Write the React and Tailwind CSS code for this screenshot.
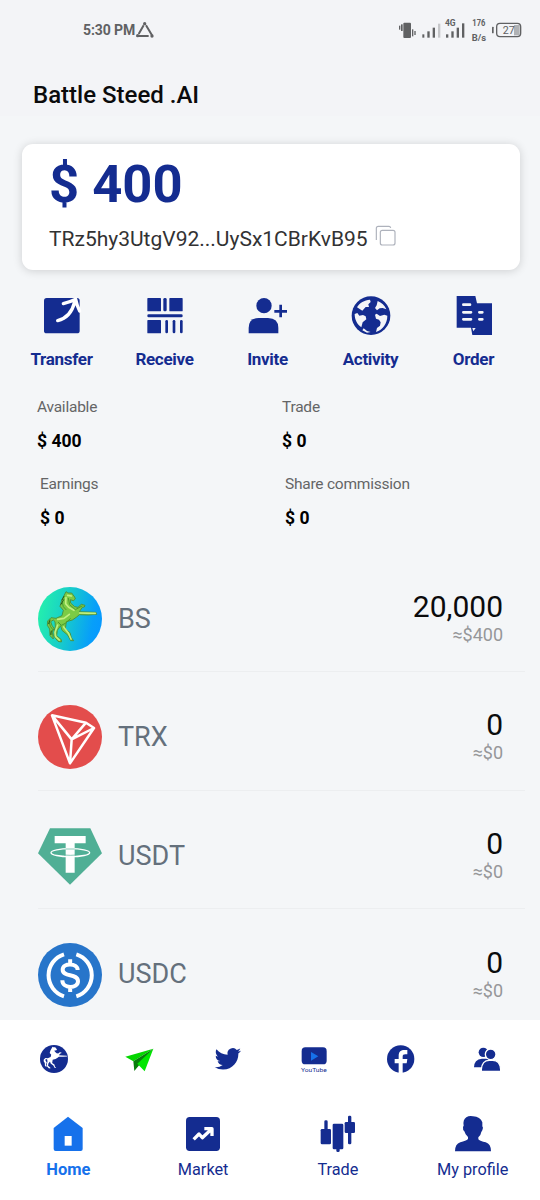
import React from "react";

const HORSE =
  "M138 62L144 66L155 66L164 78L166 84L160 89L151 86L152 96L164 107L174 109L184 100L195 103L193 108L187 109L178 122L228 124L230 130L204 132L178 131L170 138L157 147L139 152L136 174L150 185L154 200L161 209L152 209L143 192L126 178L122 164L112 178L110 194L124 206L124 213L114 211L101 195L103 178L106 166L105 152L100 147L92 152L96 163L102 172L97 184L100 204L90 194L89 174L82 163L83 150L93 140L108 142L126 134L130 118L120 106L125 88Z";

function StatusBar() {
  return (
    <div className="flex h-[60px] shrink-0 items-center justify-between pl-[83px] pr-[18px] text-[#606163]">
      <div className="flex items-center gap-[2px]">
        <span className="w-[51px] whitespace-nowrap text-[14px] font-bold leading-5 tracking-[-0.1px]">5:30 PM</span>
        <svg className="h-[16px] w-[18px]" viewBox="410 65 54 48" fill="none" stroke="currentColor" strokeWidth="6">
          <path d="M433 75L418 101M440 75L458 105M413 107H448" />
          <g fill="currentColor" stroke="none">
            <circle cx="436" cy="70" r="5" />
            <circle cx="415" cy="106" r="5" />
            <circle cx="458" cy="107" r="5" />
          </g>
        </svg>
      </div>
      <svg className="h-[26px] w-[124px]" viewBox="384 50 372 78">
        <g fill="currentColor">
          <rect x="400" y="67" width="23" height="46" rx="3" />
          <rect x="393" y="72" width="5" height="20" />
          <rect x="387" y="76" width="4" height="12" />
          <rect x="426" y="87" width="4" height="21" />
          <rect x="433" y="92" width="4" height="12" />
          <rect x="457" y="102" width="6" height="10" />
          <rect x="472" y="93" width="7" height="19" />
          <rect x="488" y="82" width="7" height="30" />
          <rect x="504" y="70" width="7" height="42" opacity=".3" />
          <rect x="528" y="102" width="7" height="10" />
          <rect x="544" y="93" width="7" height="19" />
          <rect x="560" y="82" width="7" height="30" />
          <rect x="576" y="69" width="7" height="43" />
          <rect x="666" y="79" width="5" height="20" rx="2" />
          <rect x="732" y="74" width="17" height="31" opacity=".45" />
        </g>
        <rect x="680" y="69" width="72" height="40" rx="10" fill="none" stroke="currentColor" strokeWidth="4" />
        <g fill="currentColor" fontFamily="Roboto, sans-serif">
          <text x="525" y="78" fontSize="27" fontWeight="700" textLength="32" lengthAdjust="spacingAndGlyphs">4G</text>
          <text x="607" y="78" fontSize="27" fontWeight="700" textLength="39" lengthAdjust="spacingAndGlyphs">176</text>
          <text x="605" y="121" fontSize="26" fontWeight="700" textLength="43" lengthAdjust="spacingAndGlyphs">B/s</text>
          <text x="698" y="101" fontSize="34" textLength="36" lengthAdjust="spacingAndGlyphs">27</text>
        </g>
      </svg>
    </div>
  );
}

const actions = [
  {
    label: "Transfer",
    icon: (
      <svg className="h-[44px] w-[44px]" viewBox="121 42 132 132">
        <rect x="133" y="54" width="107" height="106" rx="8" fill="#142c90" />
        <path d="M174 122C198 116 217 98 225 66M191 71C203 68 214 65 228 58C230 68 233 79 240 93" fill="none" stroke="#fff" strokeWidth="10" strokeLinecap="round" strokeLinejoin="round" />
      </svg>
    ),
  },
  {
    label: "Receive",
    icon: (
      <svg className="h-[44px] w-[44px]" viewBox="429 42 132 132" fill="#142c90">
        <rect x="442" y="54" width="41" height="40" rx="2" />
        <rect x="490" y="54" width="10" height="40" rx="4" />
        <rect x="508" y="54" width="40" height="40" rx="2" />
        <rect x="442" y="103" width="106" height="9" rx="4" />
        <rect x="442" y="120" width="41" height="40" rx="2" />
        <rect x="496" y="120" width="8" height="40" rx="4" />
        <rect x="518" y="120" width="8" height="40" rx="4" />
        <rect x="540" y="120" width="8" height="40" rx="4" />
      </svg>
    ),
  },
  {
    label: "Invite",
    icon: (
      <svg className="h-[44px] w-[44px]" viewBox="737 42 132 132" fill="#142c90">
        <circle cx="791" cy="77" r="23" />
        <path d="M745 160V144Q745 114 775 114H803Q834 114 834 144V160Z" />
        <path d="M841 74V112M822 94H860" stroke="#142c90" strokeWidth="8" />
      </svg>
    ),
  },
  {
    label: "Activity",
    icon: (
      <svg className="h-[44px] w-[44px]" viewBox="237 42 132 132">
        <circle cx="303" cy="107" r="58" fill="#142c90" />
        <g fill="#f4f5f8">
          <path d="M261 82C269 68 283 61 300 59L302 66L295 73L297 81L287 81L277 92Z" />
          <path d="M254 102L262 99L268 107L279 105L287 109L289 118L278 127L274 142C261 132 254 119 254 102Z" />
          <path d="M323 63C335 68 344 76 349 88L338 84L329 85L321 91L315 84L320 76Z" />
          <path d="M352 107C352 131 338 149 318 156L321 144L330 137L332 127L327 119L318 116L315 104L320 101L330 108L343 104Z" />
          <path d="M281 145L291 153L302 156L291 158L277 151Z" />
        </g>
      </svg>
    ),
  },
  {
    label: "Order",
    icon: (
      <svg className="h-[44px] w-[44px]" viewBox="545 42 132 132">
        <path d="M559 48H615L620 70H665V165H606L602 143H559Z" fill="#142c90" />
        <path d="M579 74H599M579 97H602M579 118H602M627 97H636M627 118H636" stroke="#f4f5f8" strokeWidth="8" strokeLinecap="round" />
        <path d="M606 144H616L609 154Z" fill="#f4f5f8" />
      </svg>
    ),
  },
];

const stats = [
  [
    ["Available", "$ 400"],
    ["Trade", "$ 0"],
  ],
  [
    ["Earnings", "$ 0"],
    ["Share commission", "$ 0"],
  ],
];

const coins = [
  {
    name: "BS",
    amount: "20,000",
    value: "≈$400",
    icon: (
      <svg className="h-[64px] w-[64px]" viewBox="54 48 192 192">
        <defs>
          <linearGradient id="bs" x1="0" y1=".4" x2="1" y2=".6">
            <stop offset="0" stopColor="#24efad" />
            <stop offset=".4" stopColor="#18cfc8" />
            <stop offset=".85" stopColor="#079ff9" />
            <stop offset="1" stopColor="#0699ff" />
          </linearGradient>
        </defs>
        <circle cx="150" cy="144" r="96" fill="url(#bs)" />
        <path d={HORSE} fill="#7ccb45" stroke="#4a8a35" strokeWidth="2.5" strokeLinejoin="round" />
        <g fill="none" strokeLinecap="round" strokeLinejoin="round">
          <path d="M143 73L154 75M138 80L137 98L146 109L162 118M113 145L132 142L148 130M179 126L226 127M113 162L105 184L107 197L118 207M131 168L145 186L153 204" stroke="#c3f082" strokeWidth="5" />
          <path d="M145 82L149 101L166 116L186 105M127 95L130 107L138 116M115 154L124 163L136 157L151 143M87 152L91 166L98 175L95 191" stroke="#4a9a30" strokeWidth="3" />
          <path d="M132 76L126 87M131 86L123 100M90 147L86 158M94 180L92 190" stroke="#265d1d" strokeWidth="3" />
        </g>
      </svg>
    ),
  },
  {
    name: "TRX",
    amount: "0",
    value: "≈$0",
    icon: (
      <svg className="h-[64px] w-[64px]" viewBox="55 405 192 192">
        <circle cx="151" cy="501" r="96" fill="#e34d4c" />
        <path d="M97 436L199 458L223 474L151 580ZM97 436L156 508L199 458M156 508L223 474M156 508L151 580" fill="none" stroke="#fff" strokeWidth="7.5" strokeLinejoin="round" />
      </svg>
    ),
  },
  {
    name: "USDT",
    amount: "0",
    value: "≈$0",
    icon: (
      <svg className="h-[64px] w-[64px]" viewBox="55 40 192 192">
        <path d="M91 53H212L247 128L151 222L55 128Z" fill="#50af95" />
        <ellipse cx="152" cy="126" rx="58" ry="12" fill="none" stroke="#fff" strokeWidth="4" />
        <path d="M105 76H198V98H165V186H138V98H105Z" fill="#fff" />
        <path d="M138 115H165M133 133Q152 135 170 133" fill="none" stroke="#50af95" strokeWidth="2" />
      </svg>
    ),
  },
  {
    name: "USDC",
    amount: "0",
    value: "≈$0",
    icon: (
      <svg className="h-[64px] w-[64px]" viewBox="55 396 192 192">
        <circle cx="151" cy="492" r="96" fill="#2775ca" />
        <g fill="none" stroke="#fff" strokeWidth="12">
          <path d="M133 430A66 66 0 0 0 133 556M170 430A66 66 0 0 1 170 556" />
          <path d="M174 477C174 456 129 454 129 476C129 500 175 485 175 511C175 534 128 534 128 508M151.500 445V464M151.500 524V543" />
        </g>
      </svg>
    ),
  },
];

const links = [
  <svg key="steed" className="h-[28px] w-[28px]" viewBox="122 45 84 84">
    <circle cx="164" cy="87" r="42" fill="#142c90" />
    <path d={HORSE} fill="#fff" transform="translate(94 23) scale(.475 .435)" />
  </svg>,
  <svg key="plane" className="h-[28px] w-[28px] overflow-visible" viewBox="380 45 84 84">
    <path d="M459 56L375 80L399 94Z" fill="#04d600" />
    <path d="M459 56L399 94L402 123L415 107Z" fill="#087d0c" />
    <path d="M459 56L411 101L433 124Z" fill="#00e600" />
  </svg>,
  <svg key="bird" className="h-[28px] w-[28px]" viewBox="0 0 24 24" fill="#142c90">
    <path d="M23.950 4.570a10 10 0 0 1-2.820.780 4.960 4.960 0 0 0 2.160-2.730c-.950.560-2 .960-3.130 1.190a4.920 4.920 0 0 0-8.380 4.480C7.690 8.090 4.070 6.130 1.640 3.160a4.820 4.820 0 0 0-.670 2.480c0 1.710.870 3.210 2.190 4.100a4.900 4.900 0 0 1-2.230-.620v.060a4.920 4.920 0 0 0 3.950 4.830 5 5 0 0 1-2.210.080 4.940 4.940 0 0 0 4.600 3.420A9.870 9.870 0 0 1 0 19.540a13.990 13.990 0 0 0 7.560 2.210c9.050 0 14-7.500 14-13.980 0-.210 0-.420-.020-.630a9.940 9.940 0 0 0 2.460-2.550z" transform="translate(.6 .6) scale(.94)" />
  </svg>,
  <svg key="video" className="h-[28px] w-[28px]" viewBox="90 48 84 84">
    <rect x="95" y="55" width="75" height="51" rx="11" fill="#142c90" />
    <path d="M123 69V95L145 82Z" fill="#1671eb" />
    <text x="93" y="130" fontSize="18" fill="#142c90" fontFamily="Roboto, sans-serif" textLength="77" lengthAdjust="spacingAndGlyphs">YouTube</text>
  </svg>,
  <svg key="fb" className="h-[28px] w-[28px]" viewBox="352 45 84 84">
    <circle cx="393" cy="87" r="41" fill="#142c90" />
    <path d="M387 129V100H375V87H387V77C387 65 394 60 404 60H413V73H407C401 73 399 75 399 80V87H413L411 100H399V129Z" fill="#fff" />
  </svg>,
  <svg key="group" className="h-[28px] w-[28px]" viewBox="612 45 84 84" fill="#142c90">
    <circle cx="640" cy="67" r="14" />
    <path d="M612 112Q612 88 636 86H655V112Z" />
    <circle cx="662" cy="73" r="16" stroke="#fff" strokeWidth="4" />
    <path d="M634 124V118Q636 91 658 91H668Q690 91 692 118V124Z" stroke="#fff" strokeWidth="4" />
  </svg>,
];

const tabs = [
  {
    label: "Home",
    active: true,
    icon: (
      <svg className="h-[40px] w-[40px]" viewBox="142 252 120 120">
        <path d="M202 260L246 294V357Q246 363 240 363H165Q159 363 159 357V294Z" fill="#1671eb" />
        <rect x="192" y="318" width="21" height="29" fill="#fff" />
      </svg>
    ),
  },
  {
    label: "Market",
    icon: (
      <svg className="h-[40px] w-[40px]" viewBox="549 252 120 120">
        <rect x="558" y="261" width="102" height="102" rx="11" fill="#142c90" />
        <path d="M581 328L597 312L607 323L635 297M613 296H636V318" fill="none" stroke="#fff" strokeWidth="10" strokeLinejoin="round" />
      </svg>
    ),
  },
  {
    label: "Trade",
    icon: (
      <svg className="h-[40px] w-[40px]" viewBox="145 252 120 120" fill="#142c90">
        <rect x="164" y="271" width="10" height="40" rx="4" />
        <rect x="153" y="297" width="31" height="46" rx="4" />
        <rect x="189" y="281" width="32" height="77" rx="4" />
        <rect x="200" y="350" width="10" height="16" rx="4" />
        <rect x="235" y="257" width="10" height="86" rx="4" />
        <rect x="225" y="276" width="31" height="33" rx="4" />
      </svg>
    ),
  },
  {
    label: "My profile",
    icon: (
      <svg className="h-[40px] w-[40px]" viewBox="552 252 120 120" fill="#142c90">
        <path d="M592 262Q601 256 612 259Q634 260 640 277L640 289Q644 292 640 301Q636 306 634 315L628 322V328Q634 334 650 337Q666 342 666 364H558Q558 342 574 337Q591 333 597 327V321L590 313L586 304Q581 300 582 291L584 287Q581 269 592 262Z" />
      </svg>
    ),
  },
];

export default function App() {
  return (
    <div className="flex h-[1200px] w-[540px] flex-col overflow-hidden bg-[#f4f6f8] font-[Roboto,sans-serif]">
      <header className="h-[116px] shrink-0 bg-[#f3f4f7]">
        <StatusBar />
        <h1 className="pl-[33px] pt-[17px] text-[24px] font-medium leading-[36px] text-[#0b0b0c]">Battle Steed .AI</h1>
      </header>

      <section className="ml-[22px] mt-[28px] h-[126px] w-[498px] shrink-0 rounded-[11px] bg-white px-[27px] shadow-[0_1px_10px_rgba(0,0,0,0.16)]">
        <div className="text-[52.500px] font-bold leading-[81px] text-[#142c90]">$ 400</div>
        <div className="flex h-[29px] items-center gap-[7px]">
          <span className="whitespace-nowrap text-[21px] leading-[29px] text-[#323233]">TRz5hy3UtgV92...UySx1CBrKvB95</span>
          <svg className="mb-[7px] h-[22px] w-[22px]" viewBox="315 285 66 66" fill="none" stroke="#aeb2bc" strokeWidth="3.500">
            <rect x="331" y="301" width="44" height="44" rx="6" />
            <path d="M319 330V295Q319 289 325 289H357Q361 289 362 294" />
          </svg>
        </div>
      </section>

      <nav className="ml-[10px] mt-[24px] grid w-[515px] shrink-0 grid-cols-5">
        {actions.map((a) => (
          <div key={a.label} className="flex flex-col items-center gap-[11px]">
            {a.icon}
            <span className="text-[17px] font-bold leading-[21px] tracking-[-0.3px] text-[#142c90]">{a.label}</span>
          </div>
        ))}
      </nav>

      <section className="mt-[26px] flex shrink-0 flex-col gap-[20px]">
        {stats.map((row, i) => (
          <div key={i} className={i === 0 ? "flex pl-[37px]" : "flex pl-[40px] pt-[0.500px]"}>
            {row.map(([label, value]) => (
              <div key={label} className="w-[245px]">
                <div className="whitespace-nowrap text-[15.500px] leading-[23px] tracking-[-0.23px] text-[#646566]">{label}</div>
                <div className="mt-[11px] text-[17.500px] font-bold leading-[22px] text-black">{value}</div>
              </div>
            ))}
          </div>
        ))}
      </section>

      <main className="mt-[25px] min-h-0 flex-1 overflow-hidden">
        {coins.map((c) => (
          <div key={c.name} className="ml-[38px] mr-[15px] flex h-[118.600px] items-center border-b border-[#eceef0] pr-[22px] pt-[13px]">
            {c.icon}
            <span className="ml-[16px] flex-1 text-[27px] text-[#64707c]">{c.name}</span>
            <div className="text-right">
              <div className="text-[30px] leading-[32px] text-[#0b0b0c]">{c.amount}</div>
              <div className="text-[18px] leading-[24px] text-[#969799]">{c.value}</div>
            </div>
          </div>
        ))}
      </main>

      <footer className="h-[180px] shrink-0 bg-white">
        <div className="ml-[11px] grid h-[78px] w-[520px] grid-cols-6 place-items-center">{links}</div>
        <div className="grid grid-cols-4 pl-[1px] pt-[16px]">
          {tabs.map((t) => (
            <div key={t.label} className="flex flex-col items-center gap-[5px]">
              {t.icon}
              <span className={t.active ? "text-[16.500px] font-bold leading-[21px] text-[#1671eb]" : "text-[16.300px] leading-[21px] text-[#142c90]"}>{t.label}</span>
            </div>
          ))}
        </div>
      </footer>
    </div>
  );
}
